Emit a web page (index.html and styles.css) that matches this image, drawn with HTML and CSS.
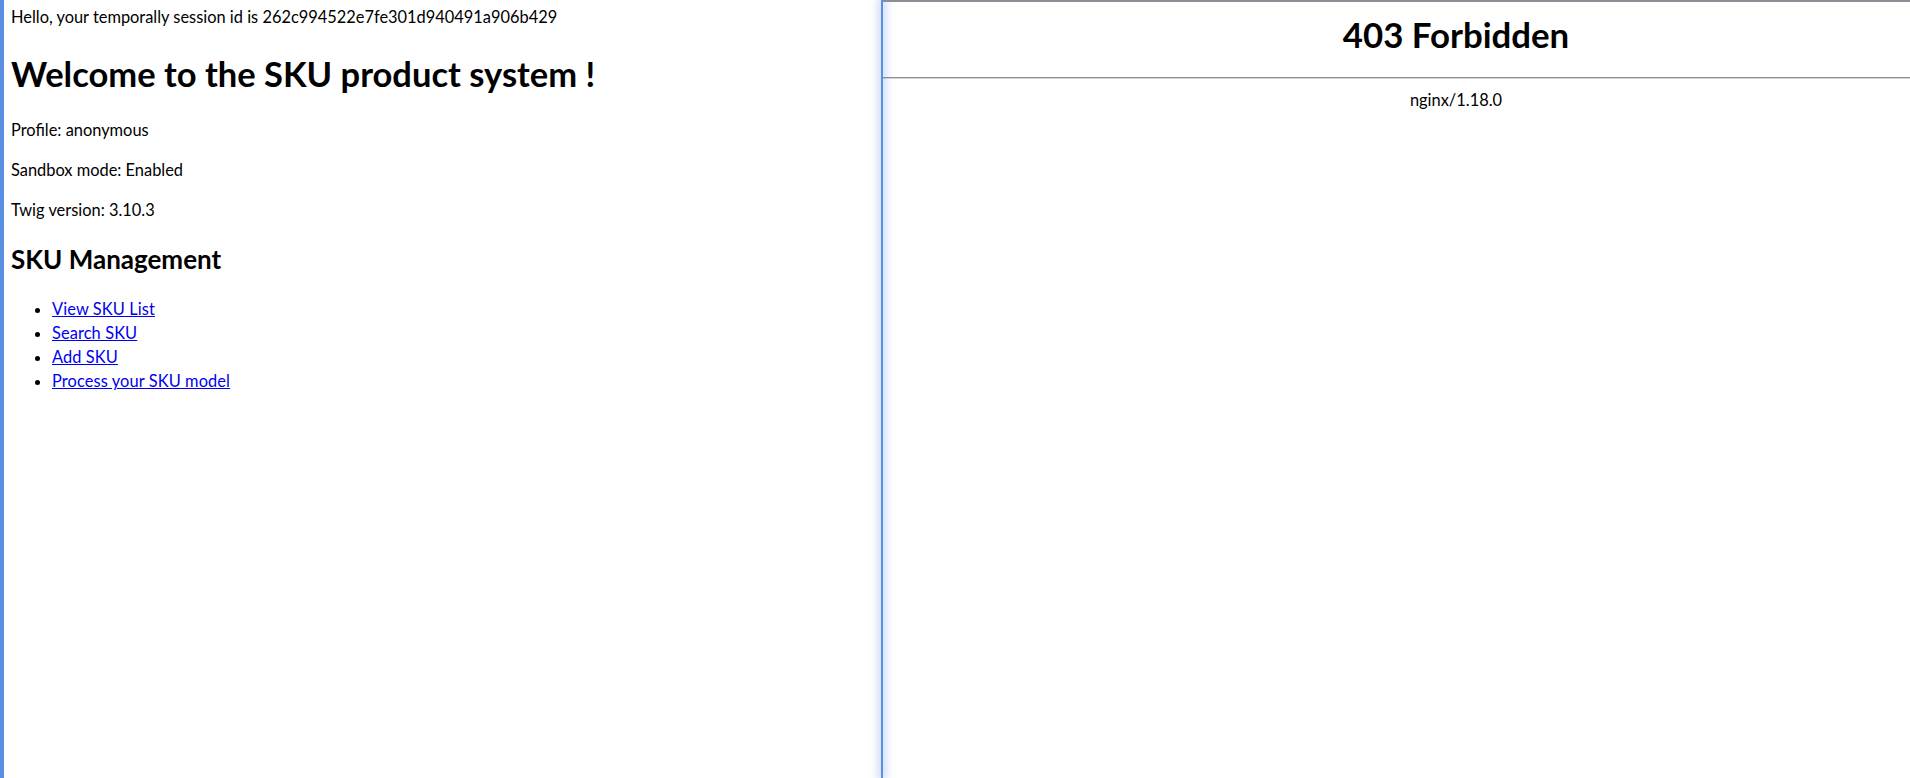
FILE: index.html
```html
<!DOCTYPE html>
<html lang="en">
<head>
    <meta charset="UTF-8">
    <meta name="viewport" content="width=device-width, initial-scale=1.0">
    <title>SKU product system</title>
    <link rel="stylesheet" href="styles.css">
</head>
<body>
    <div class="split">
        <!-- app frame -->
        <div class="pane app">
            <p class="hello">Hello, your temporally session id is 262c994522e7fe301d940491a906b429</p>
            <h1>Welcome to the SKU product system !</h1>
            <p>Profile: anonymous</p>
            <p>Sandbox mode: Enabled</p>
            <p>Twig version: 3.10.3</p>
            <h2>SKU Management</h2>
            <ul>
                <li><a href="#">View SKU List</a></li>
                <li><a href="#">Search SKU</a></li>
                <li><a href="#">Add SKU</a></li>
                <li><a href="#">Process your SKU model</a></li>
            </ul>
        </div>
        <div class="divider"></div>
        <!-- nginx error frame -->
        <div class="pane error">
            <div class="error-inner">
                <h1>403 Forbidden</h1>
                <hr>
                <p>nginx/1.18.0</p>
            </div>
        </div>
    </div>
</body>
</html>
```

FILE: styles.css
```css
*{
    box-sizing: border-box;
}
html, body{
    margin: 0;
    height: 100%;
    background: #fff;
}
body{
    font-family: Lato, sans-serif;
    font-size: 16.4px;
    line-height: 24px;
    color: #000;
    overflow: hidden;
}
.split{
    display: flex;
    height: 100%;
}
.pane{
    height: 100%;
}
.app{
    width: 881px;
    border-left: 4px solid #5a8fe3;
    padding: 5px 8px 0 7px;
}
.app p{
    margin: 16px 0;
}
.app .hello{
    margin-top: 0;
}
.app h1{
    font-size: 34.5px;
    line-height: 48px;
    margin: 21px 0 20px;
}
.app h2{
    font-size: 26px;
    line-height: 36px;
    margin: 19px 0 20px;
}
.app ul{
    margin: 16px 0;
    padding-left: 41px;
}
.app li{
    letter-spacing: 0.1px;
}
.app a{
    color: #0000ee;
}
.divider{
    width: 2px;
    background: #5a8fe3;
    box-shadow: 0 0 8px 3px rgba(90, 143, 227, 0.35);
    position: relative;
    z-index: 1;
}
.error{
    flex: 1;
    overflow: hidden;
    border-top: 2px solid #8a8f98;
}
.error-inner{
    width: 1146px;
    text-align: center;
}
.error h1{
    font-size: 34.8px;
    line-height: 48px;
    margin: 0;
    padding-top: 9px;
    height: 75px;
}
.error hr{
    margin: 0;
    border: 0;
    border-top: 1px solid #8e8e8e;
    border-bottom: 1px solid #d8d8d8;
}
.error p{
    margin: 9px 0;
}
```
